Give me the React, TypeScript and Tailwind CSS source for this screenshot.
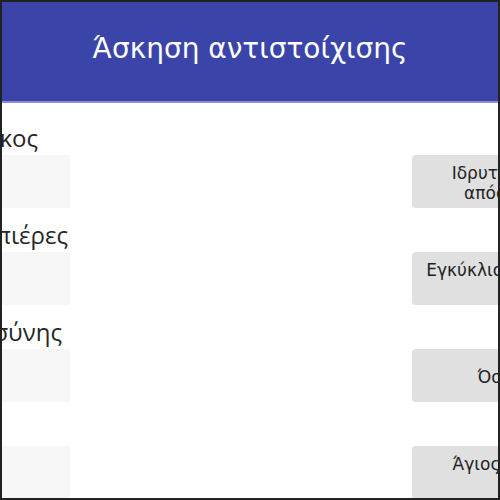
import React from 'react';

type Row = {
    label: string;
    labelWidth: number;
    lines: string[];
};

const rows: Row[] = [
    { label: 'Οικουμενικος', labelWidth: 36, lines: ['Ιδρυτής της Σχολής', 'απόστολος Τίτος'] },
    { label: 'Καμπιέρες', labelWidth: 66, lines: ['Εγκύκλιος του Πατριάρχη', 'Ιερεμία'] },
    { label: 'Ιωάννης Ρασύνης', labelWidth: 60, lines: ['Όσιος Λουκάς'] },
    { label: '', labelWidth: 0, lines: ['Άγιος Γεώργιος του', 'Ιερού'] },
];

const MatchRow = ({ row }: { row: Row }) => {
    return (
        <div className="flex flex-col">
            <div className="h-[44px] flex items-end pb-[2px]">
                <div
                    className="overflow-hidden flex justify-end whitespace-nowrap text-[24px] leading-[30px] text-[#262626]"
                    style={{ width: row.labelWidth }}
                >
                    <span className="shrink-0">{row.label}</span>
                </div>
            </div>
            <div className="grid grid-cols-[68px_342px_250px] h-[53px]">
                <div className="bg-[#f7f7f7]" />
                <div />
                <button className="bg-[#e0e0e0] rounded-[4px] pt-[3px] flex flex-col items-center justify-center text-center text-[17px] leading-[20px] text-[#1f1f1f] font-['DejaVu_Sans',sans-serif]">
                    {row.lines.map((line, i) => (
                        <span key={i} className="whitespace-nowrap">{line}</span>
                    ))}
                </button>
            </div>
        </div>
    );
};

const App = () => {
    return (
        <div className="w-[500px] h-[500px] overflow-hidden border-2 border-[#222] box-border bg-white font-['Open_Sans',sans-serif]">
            <div className="h-[101px] bg-[#3b44a9] border-b-2 border-[#8b90d4] flex items-center justify-center">
                <h1 className="text-white text-[28px] font-['DejaVu_Sans',sans-serif] pb-[6px]">
                    Άσκηση αντιστοίχισης
                </h1>
            </div>
            <div className="w-[660px] pt-[8px] flex flex-col">
                {rows.map((row, i) => (
                    <MatchRow key={i} row={row} />
                ))}
            </div>
        </div>
    );
};

export default App;
